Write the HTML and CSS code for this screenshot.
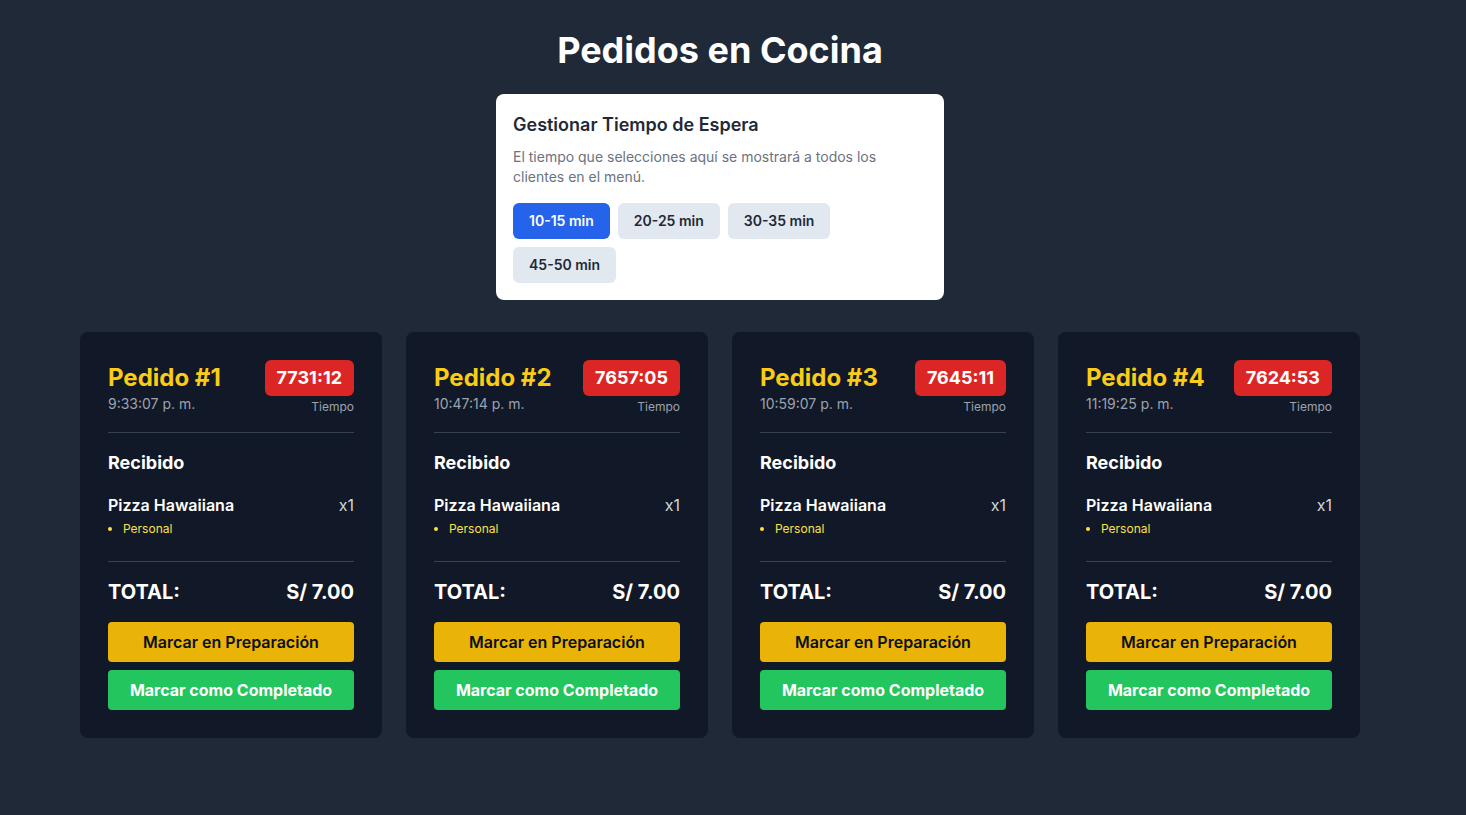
FILE: index.html
```html
<!DOCTYPE html>
<html lang="es">
<head>
  <meta charset="UTF-8" />
  <meta name="viewport" content="width=device-width, initial-scale=1.0" />
  <title>Pedidos en Cocina</title>
  <link rel="stylesheet" href="styles.css">
</head>
<body>
  <div class="page">
    <h1>Pedidos en Cocina</h1>

    <div class="wait-panel">
      <h2>Gestionar Tiempo de Espera</h2>
      <p>El tiempo que selecciones aquí se mostrará a todos los clientes en el menú.</p>
      <div class="wait-options">
        <button class="wait-btn active">10-15 min</button>
        <button class="wait-btn">20-25 min</button>
        <button class="wait-btn">30-35 min</button>
        <button class="wait-btn">45-50 min</button>
      </div>
    </div>

    <div class="orders">
      <div class="order-card">
        <div class="order-head">
          <div>
            <div class="order-title">Pedido #1</div>
            <div class="order-time">9:33:07 p. m.</div>
          </div>
          <div class="timer">
            <span class="timer-badge">7731:12</span>
            <span class="timer-label">Tiempo</span>
          </div>
        </div>
        <div class="order-status">Recibido</div>
        <div class="order-items">
          <div class="item-row">
            <span class="item-name">Pizza Hawaiiana</span>
            <span class="item-qty">x1</span>
          </div>
          <ul class="item-opts"><li>Personal</li></ul>
        </div>
        <div class="order-total"><span>TOTAL:</span><span>S/ 7.00</span></div>
        <button class="btn btn-prep">Marcar en Preparación</button>
        <button class="btn btn-done">Marcar como Completado</button>
      </div>

      <div class="order-card">
        <div class="order-head">
          <div>
            <div class="order-title">Pedido #2</div>
            <div class="order-time">10:47:14 p. m.</div>
          </div>
          <div class="timer">
            <span class="timer-badge">7657:05</span>
            <span class="timer-label">Tiempo</span>
          </div>
        </div>
        <div class="order-status">Recibido</div>
        <div class="order-items">
          <div class="item-row">
            <span class="item-name">Pizza Hawaiiana</span>
            <span class="item-qty">x1</span>
          </div>
          <ul class="item-opts"><li>Personal</li></ul>
        </div>
        <div class="order-total"><span>TOTAL:</span><span>S/ 7.00</span></div>
        <button class="btn btn-prep">Marcar en Preparación</button>
        <button class="btn btn-done">Marcar como Completado</button>
      </div>

      <div class="order-card">
        <div class="order-head">
          <div>
            <div class="order-title">Pedido #3</div>
            <div class="order-time">10:59:07 p. m.</div>
          </div>
          <div class="timer">
            <span class="timer-badge">7645:11</span>
            <span class="timer-label">Tiempo</span>
          </div>
        </div>
        <div class="order-status">Recibido</div>
        <div class="order-items">
          <div class="item-row">
            <span class="item-name">Pizza Hawaiiana</span>
            <span class="item-qty">x1</span>
          </div>
          <ul class="item-opts"><li>Personal</li></ul>
        </div>
        <div class="order-total"><span>TOTAL:</span><span>S/ 7.00</span></div>
        <button class="btn btn-prep">Marcar en Preparación</button>
        <button class="btn btn-done">Marcar como Completado</button>
      </div>

      <div class="order-card">
        <div class="order-head">
          <div>
            <div class="order-title">Pedido #4</div>
            <div class="order-time">11:19:25 p. m.</div>
          </div>
          <div class="timer">
            <span class="timer-badge">7624:53</span>
            <span class="timer-label">Tiempo</span>
          </div>
        </div>
        <div class="order-status">Recibido</div>
        <div class="order-items">
          <div class="item-row">
            <span class="item-name">Pizza Hawaiiana</span>
            <span class="item-qty">x1</span>
          </div>
          <ul class="item-opts"><li>Personal</li></ul>
        </div>
        <div class="order-total"><span>TOTAL:</span><span>S/ 7.00</span></div>
        <button class="btn btn-prep">Marcar en Preparación</button>
        <button class="btn btn-done">Marcar como Completado</button>
      </div>
    </div>
  </div>
</body>
</html>
```

FILE: styles.css
```css
body {
  margin: 0;
  font-family: Inter, "Noto Sans", sans-serif;
  background-color: #1f2937;
  color: #fff;
}
.page {
  max-width: 1280px;
  margin-left: 80px;
  padding-top: 30px;
}
h1 {
  margin: 0 0 24px;
  font-size: 36px;
  line-height: 40px;
  font-weight: 700;
  text-align: center;
}
.wait-panel {
  width: 448px;
  box-sizing: border-box;
  margin: 0 auto 32px;
  padding: 17px;
  background-color: #fff;
  border-radius: 8px;
  color: #1f2937;
}
.wait-panel h2 {
  margin: 0 0 8px;
  font-size: 18px;
  line-height: 28px;
  font-weight: 600;
}
.wait-panel p {
  margin: 0 0 16px;
  font-size: 14px;
  line-height: 20px;
  color: #6b7280;
}
.wait-options {
  display: flex;
  flex-wrap: wrap;
  gap: 8px;
}
.wait-btn {
  font-family: inherit;
  font-size: 14px;
  line-height: 20px;
  font-weight: 600;
  padding: 8px 16px;
  border: none;
  border-radius: 6px;
  background-color: #e2e8f0;
  color: #1f2937;
}
.wait-btn.active {
  background-color: #2563eb;
  color: #fff;
}
.orders {
  display: grid;
  grid-template-columns: repeat(4, 1fr);
  gap: 24px;
}
.order-card {
  display: flex;
  flex-direction: column;
  padding: 28px;
  background-color: #111827;
  border-radius: 8px;
}
.order-head {
  display: flex;
  justify-content: space-between;
  align-items: flex-start;
  padding-bottom: 17px;
  border-bottom: 1px solid #374151;
}
.order-title {
  font-size: 24px;
  line-height: 32px;
  font-weight: 700;
  color: #facc15;
  margin-top: 2px;
}
.order-time {
  font-size: 14px;
  line-height: 20px;
  color: #9ca3af;
}
.timer {
  display: flex;
  flex-direction: column;
  align-items: flex-end;
}
.timer-badge {
  background-color: #dc2626;
  color: #fff;
  font-size: 18px;
  line-height: 36px;
  font-weight: 700;
  padding: 0 12px;
  border-radius: 6px;
}
.timer-label {
  margin-top: 3px;
  font-size: 12px;
  line-height: 16px;
  color: #9ca3af;
}
.order-status {
  margin-top: 16px;
  font-size: 18px;
  line-height: 28px;
  font-weight: 700;
}
.order-items {
  margin-top: 16px;
  padding-bottom: 24px;
  border-bottom: 1px solid #374151;
}
.item-row {
  display: flex;
  justify-content: space-between;
  font-size: 16px;
  line-height: 24px;
}
.item-name {
  font-weight: 600;
}
.item-qty {
  color: #d1d5db;
}
.item-opts {
  margin: 4px 0 0;
  padding-left: 15px;
  font-size: 12px;
  line-height: 16px;
  color: #fde047;
}
.order-total {
  display: flex;
  justify-content: space-between;
  margin-top: 16px;
  font-size: 20px;
  line-height: 28px;
  font-weight: 700;
}
.btn {
  font-family: inherit;
  font-size: 16px;
  line-height: 24px;
  font-weight: 700;
  padding: 8px 16px;
  border: none;
  border-radius: 4px;
}
.btn-prep {
  margin-top: 16px;
  background-color: #eab308;
  color: #0b0f19;
  font-weight: 600;
}
.btn-done {
  margin-top: 8px;
  background-color: #22c55e;
  color: #fff;
}
```
